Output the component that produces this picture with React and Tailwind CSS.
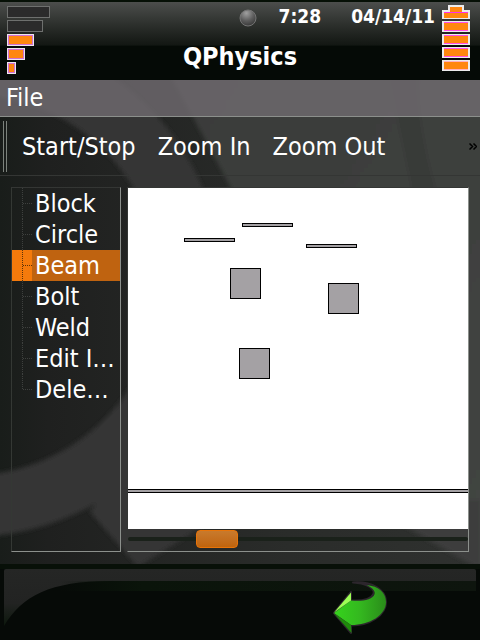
import { useState } from "react";

const TOOLS = ["Block", "Circle", "Beam", "Bolt", "Weld", "Edit I…", "Dele…"];

function Backdrop() {
  return (
    <svg
      aria-hidden="true"
      className="absolute inset-0 h-full w-full"
      viewBox="0 0 480 640"
      preserveAspectRatio="xMidYMid slice"
    >
      <defs>
        <linearGradient id="base" x1="0" y1="0" x2="1" y2="0">
          <stop offset="0" stopColor="#191d1a" />
          <stop offset="0.1" stopColor="#1f201f" />
          <stop offset="0.6" stopColor="#2a2c2a" />
          <stop offset="1" stopColor="#2f312f" />
        </linearGradient>
        <linearGradient id="glow" x1="0" y1="0" x2="1" y2="1">
          <stop offset="0" stopColor="#393939" />
          <stop offset="0.5" stopColor="#3c3f3c" />
          <stop offset="1" stopColor="#434543" />
        </linearGradient>
        <filter id="soft">
          <feGaussianBlur stdDeviation="2" />
        </filter>
      </defs>
      <rect width="480" height="640" fill="url(#base)" />
      <g filter="url(#soft)">
        <path d="M130 0 L490 0 L490 580 C430 480 300 330 232 190 Z" fill="url(#glow)" />
        <path d="M388 70 L416 70 Q418 130 436 190 L412 190 Q402 140 388 70Z" fill="#393b39" />
        <circle cx="-30" cy="285" r="221" fill="none" stroke="#363636" strokeWidth="62" />
        <path d="M90 512 L138 567 L205 525 L140 440 Z" fill="#363636" />
        <path d="M360 500 L480 500 L480 570 Z" fill="#3c3d3c" />
      </g>
    </svg>
  );
}

function SignalBars() {
  return (
    <svg role="img" aria-label="Signal strength" width="43" height="80" className="shrink-0" shapeRendering="crispEdges">
      <g fill="#2b2b2b" stroke="#6e706e">
        <rect x="0.5" y="6.5" width="42" height="11" />
        <rect x="0.5" y="20.5" width="35" height="11" />
      </g>
      {[[34, 27], [48, 18], [62, 9]].map(([y, w]) => (
        <g key={y}>
          <rect x="0" y={y} width={w} height="12" fill="#eee6ee" />
          <rect x="1" y={y + 1} width={w - 2} height="10" fill="#d070d0" />
          <rect x="2" y={y + 2} width={w - 4} height="8" fill="#ff870f" />
        </g>
      ))}
    </svg>
  );
}

function Battery() {
  return (
    <svg role="img" aria-label="Battery level" width="28" height="80" className="shrink-0" shapeRendering="crispEdges">
      <rect x="6" y="5" width="16" height="7" fill="#ececec" />
      <rect x="0" y="10" width="28" height="9" fill="#ececec" />
      <rect x="8" y="7" width="12" height="6" fill="#ff870f" />
      <rect x="2" y="12" width="24" height="1" fill="#ff30e8" />
      <rect x="2" y="13" width="24" height="5" fill="#ff870f" />
      {[21, 34, 47, 60].map((y) => (
        <g key={y}>
          <rect x="0" y={y} width="28" height="11" fill="#ececec" />
          <rect x="2" y={y + 1} width="24" height="9" fill={y === 60 ? "#ffb0c0" : "#ff50e8"} />
          <rect x="2" y={y + 2} width="24" height="7" fill="#ff870f" />
        </g>
      ))}
    </svg>
  );
}

function StatusHeader() {
  return (
    <header className="relative flex h-20 border-t-2 border-[#061006] bg-[#050a06] bg-linear-to-b from-[#4c4e4c] via-[#131713] via-55% to-[#050a06] to-57% px-[7px] font-bold text-white">
      <div className="-mt-0.5 flex">
        <SignalBars />
      </div>
      <div className="flex flex-1 flex-col">
        <div className="flex h-8 items-center justify-end pr-[7px] text-[19px] leading-7">
          <svg aria-hidden="true" width="18" height="18" className="mr-[22px]">
            <defs>
              <radialGradient id="led" cx="0.4" cy="0.2" r="0.8">
                <stop offset="0" stopColor="#a0a0a0" />
                <stop offset="0.6" stopColor="#5c5c5c" />
                <stop offset="1" stopColor="#3a3a3a" />
              </radialGradient>
            </defs>
            <circle cx="9" cy="9" r="8" fill="url(#led)" stroke="#747474" />
          </svg>
          <time className="mr-[30px] pb-1">7:28</time>
          <time className="pb-1">04/14/11</time>
        </div>
        <h1 className="pr-3 text-center text-[25px] leading-[46px]">QPhysics</h1>
      </div>
      <div className="-mt-0.5 mr-[3px] flex">
        <Battery />
      </div>
    </header>
  );
}

function Branch({ active, last }) {
  const color = active ? "#5c3208" : "#3e403e";
  return (
    <svg aria-hidden="true" width="20" height="31" className={active ? "shrink-0 bg-[#f47a0c]" : "shrink-0"} shapeRendering="crispEdges">
      <g stroke={color} strokeDasharray="1 1">
        <path d={last ? "M10.5 0V16" : "M10.5 0V31"} />
        <path d="M11 15.5H20" />
      </g>
    </svg>
  );
}

function Scene() {
  return (
    <svg role="img" aria-label="Physics scene" viewBox="0 0 340 341" className="block h-auto w-full bg-white" shapeRendering="crispEdges">
      <g fill="#a4a1a4" stroke="#000">
        <rect x="56.5" y="50.5" width="50" height="3" />
        <rect x="114.5" y="35.5" width="50" height="3" />
        <rect x="178.5" y="56.5" width="50" height="3" />
        <rect x="102.5" y="80.5" width="30" height="30" />
        <rect x="200.5" y="95.5" width="30" height="30" />
        <rect x="111.5" y="160.5" width="30" height="30" />
        <rect x="-2.5" y="301.5" width="345" height="3" />
      </g>
    </svg>
  );
}

function BackArrow() {
  return (
    <svg aria-hidden="true" width="58" height="58" viewBox="331 580 58 58" className="block">
      <defs>
        <linearGradient id="arrow" x1="0" y1="0" x2="1" y2="0">
          <stop offset="0" stopColor="#35d41c" />
          <stop offset="0.5" stopColor="#34b81f" />
          <stop offset="1" stopColor="#2a8c1a" />
        </linearGradient>
      </defs>
      <g stroke="#2c262c" strokeWidth="2" strokeLinejoin="round">
        <path
          d="M334 613 L351 600.500 C361 601 371 600 373.500 594 C375 590 371 587 366 585 C361 583 357 583 353 582.500 C372 581 386 590 386 602 C386 615 370 625.500 351 625.500 Z"
          fill="none"
        />
        <path d="M334 613 L351 592 L351 633 Z" fill="#2c262c" />
      </g>
      <path
        d="M334 613 L351 600.500 C362 601.500 373 600 374.500 594 C375.500 590 371 587 366.500 585 C379 586 386 593 386 602 C386 615 370 625 351 625 Z"
        fill="url(#arrow)"
      />
      <path d="M334 612.500 L351 592.500 L351 600.500 Z" fill="#9dff55" />
      <path d="M334 613.500 L351 625 L351.500 633 Z" fill="#1f8a0c" />
    </svg>
  );
}

function BottomBar() {
  return (
    <footer className="relative mt-auto grid h-[76px] grid-cols-2 bg-[#060a07]">
      <svg aria-hidden="true" className="absolute inset-0 h-full w-full" viewBox="0 0 480 76" preserveAspectRatio="none">
        <defs>
          <linearGradient id="shelf" x1="0" y1="0" x2="0" y2="1">
            <stop offset="0" stopColor="#252625" />
            <stop offset="0.6" stopColor="#222322" />
            <stop offset="1" stopColor="#0d180d" />
          </linearGradient>
          <linearGradient id="lip" x1="0" y1="0" x2="1" y2="0">
            <stop offset="0" stopColor="#0a140a" stopOpacity="0" />
            <stop offset="0.2" stopColor="#0a140a" />
            <stop offset="1" stopColor="#0e150e" />
          </linearGradient>
        </defs>
        <rect width="480" height="5" fill="#081008" />
        <path d="M4 62 V7 Q4 5 6 5 H474 Q476 5 476 7 V17 H110 C50 17 22 32 4 62Z" fill="url(#shelf)" />
        <rect x="60" y="17" width="416" height="10" fill="url(#lip)" />
      </svg>
      <button type="button" aria-label="Back" className="relative col-start-2 self-start justify-self-center pt-4">
        <BackArrow />
      </button>
    </footer>
  );
}

export default function App() {
  const [selected, setSelected] = useState("Beam");
  const [scroll, setScroll] = useState(68);

  return (
    <div className="relative flex min-h-screen flex-col overflow-hidden bg-[#1f201f] font-['DejaVu_Sans_Condensed','DejaVu_Sans',sans-serif] text-[25px] text-white">
      <Backdrop />
      <StatusHeader />

      <nav className="relative flex h-[37px] items-start border-b border-[#8c908c] bg-[#706c70]/80 px-1.5 pt-0.5">
        <button type="button" className="leading-[31px]">File</button>
      </nav>

      <div role="toolbar" className="relative flex h-[59px] items-center border-b border-[#343634] px-[3px]">
        <div className="mr-[15px] h-[51px] w-1 border-x border-[#7c827c]" />
        <div className="flex flex-1 gap-[22px] pt-0.5 whitespace-nowrap">
          <button type="button">Start/Stop</button>
          <button type="button">Zoom In</button>
          <button type="button">Zoom Out</button>
        </div>
        <button type="button" aria-label="More tools">
          <svg aria-hidden="true" width="8" height="7" className="block" fill="none" stroke="#000" strokeWidth="1.5">
            <path d="M0.500 0.500 L3.500 3.500 L0.500 6.500 M4.500 0.500 L7.500 3.500 L4.500 6.500" />
          </svg>
        </button>
      </div>

      <main className="relative flex gap-1.5 px-[11px] pt-[11px] pb-3">
        <ul className="w-[110px] shrink-0 border border-t-[#343634] border-r-[#8c908c] border-b-[#8c908c] border-l-[#343834]">
          {TOOLS.map((name, i) => {
            const active = name === selected;
            return (
              <li key={name}>
                <button
                  type="button"
                  aria-pressed={active}
                  onClick={() => setSelected(name)}
                  className={
                    active
                      ? "flex h-[31px] w-full items-center gap-[3px] bg-[#bf6310] text-left leading-[31px] whitespace-nowrap"
                      : "flex h-[31px] w-full items-center gap-[3px] text-left leading-[31px] whitespace-nowrap"
                  }
                >
                  <Branch active={active} last={i === TOOLS.length - 1} />
                  <span>{name}</span>
                </button>
              </li>
            );
          })}
        </ul>

        <section className="flex min-w-0 flex-1 flex-col border border-t-[#343634] border-r-[#8c908c] border-b-[#8c908c] border-l-[#343634]">
          <Scene />
          <input
            type="range"
            aria-label="Scroll horizontally"
            min="0"
            max="298"
            value={scroll}
            onChange={(e) => setScroll(Number(e.target.value))}
            className="block h-[22px] w-full appearance-none bg-transparent pb-0.5 [&::-webkit-slider-runnable-track]:h-1 [&::-webkit-slider-runnable-track]:rounded-full [&::-webkit-slider-runnable-track]:bg-[#1a211a] [&::-webkit-slider-thumb]:-mt-[7px] [&::-webkit-slider-thumb]:h-[18px] [&::-webkit-slider-thumb]:w-[42px] [&::-webkit-slider-thumb]:appearance-none [&::-webkit-slider-thumb]:rounded-[4px] [&::-webkit-slider-thumb]:border [&::-webkit-slider-thumb]:border-[#e87408] [&::-webkit-slider-thumb]:bg-linear-to-b [&::-webkit-slider-thumb]:from-[#c87a2c] [&::-webkit-slider-thumb]:to-[#c0640c]"
          />
        </section>
      </main>

      <BottomBar />
    </div>
  );
}
